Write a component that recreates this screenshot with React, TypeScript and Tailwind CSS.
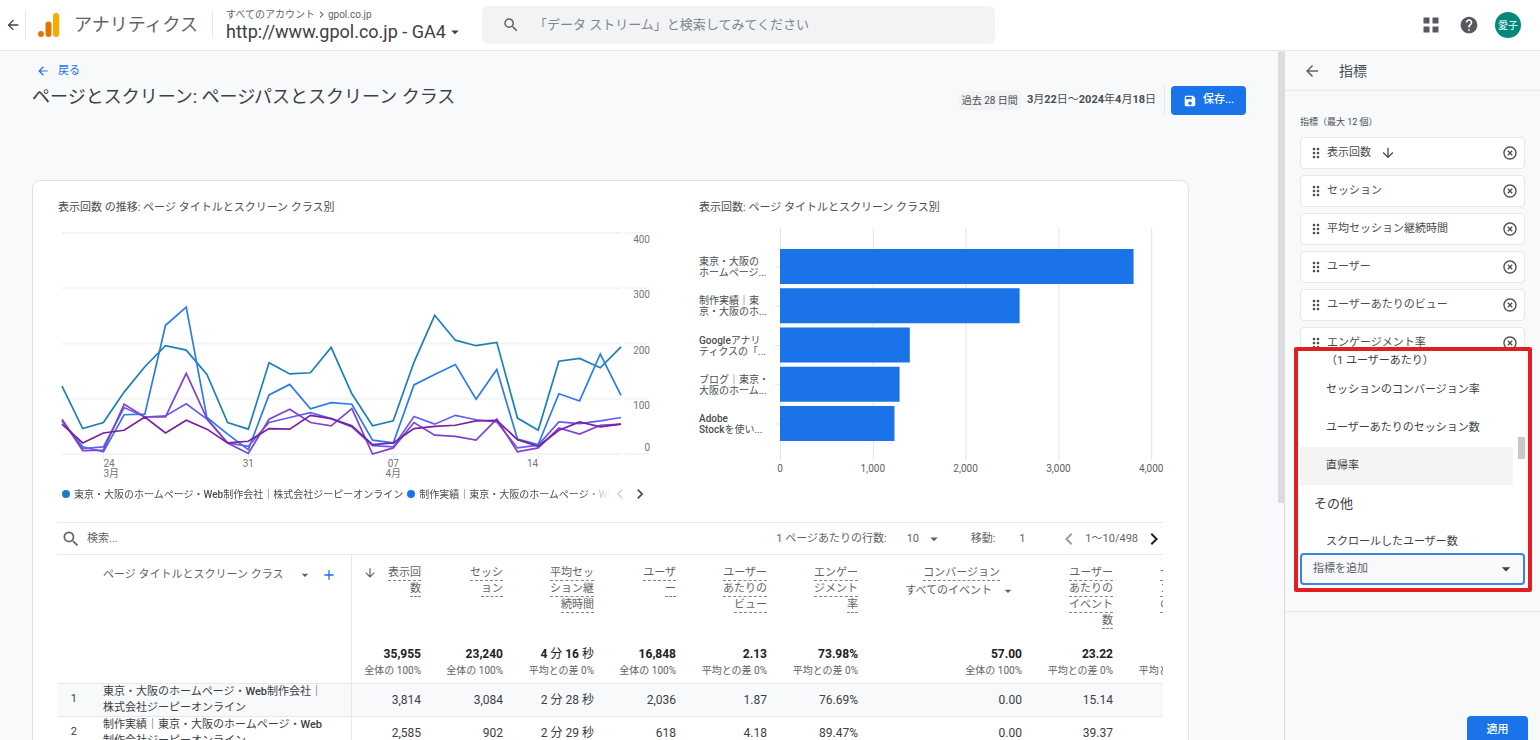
import type { ReactNode } from 'react'
import {
  MdAdd,
  MdArrowBack,
  MdArrowDownward,
  MdArrowDropDown,
  MdChevronLeft,
  MdChevronRight,
  MdDragIndicator,
  MdHelp,
  MdHighlightOff,
  MdSave,
  MdSearch,
} from 'react-icons/md'

const SERIES = [
  { color: '#1a80b6', points: [123, 46, 57, 112, 158, 196, 188, 144, 57, 45, 165, 145, 147, 193, 109, 51, 60, 166, 251, 206, 196, 202, 65, 43, 168, 173, 156, 194] },
  { color: '#2b7bef', points: [60, 13, 4, 71, 72, 233, 266, 66, 36, 8, 107, 126, 82, 93, 90, 25, 20, 125, 144, 162, 99, 153, 27, 17, 109, 96, 181, 106] },
  { color: '#645df2', points: [60, 10, 13, 84, 67, 69, 91, 63, 20, 14, 57, 66, 75, 64, 49, 15, 13, 68, 54, 70, 62, 58, 11, 16, 58, 55, 60, 66] },
  { color: '#8440d0', points: [63, 6, 7, 90, 67, 67, 146, 64, 20, 1, 63, 81, 57, 51, 82, 0, 11, 57, 34, 32, 25, 63, 4, 11, 47, 36, 52, 54] },
  { color: '#7b1fa2', points: [54, 20, 38, 43, 67, 38, 61, 45, 20, 23, 46, 45, 70, 64, 51, 17, 20, 46, 50, 52, 60, 61, 26, 14, 43, 58, 49, 54] },
]

const BARS = [
  { lines: ['東京・大阪の', 'ホームページ...'], value: 3814 },
  { lines: ['制作実績｜東', '京・大阪のホ...'], value: 2585 },
  { lines: ['Googleアナリ', 'ティクスの「...'], value: 1400 },
  { lines: ['ブログ｜東京・', '大阪のホーム...'], value: 1290 },
  { lines: ['Adobe', 'Stockを使い...'], value: 1235 },
]

const COLUMNS = [
  { lines: ['表示回', '数'],                         total: '35,955',   note: '全体の 100%',   width: 'w-[76px]',  sorted: true },
  { lines: ['セッシ', 'ョン'],                       total: '23,240',   note: '全体の 100%',   width: 'w-[82px]'  },
  { lines: ['平均セッ', 'ション継', '続時間'],       total: '4 分 16 秒', note: '平均との差 0%', width: 'w-[91px]'  },
  { lines: ['ユーザ', 'ー'],                         total: '16,848',   note: '全体の 100%',   width: 'w-[82px]'  },
  { lines: ['ユーザー', 'あたりの', 'ビュー'],       total: '2.13',     note: '平均との差 0%', width: 'w-[91px]'  },
  { lines: ['エンゲー', 'ジメント', '率'],           total: '73.98%',   note: '平均との差 0%', width: 'w-[91px]'  },
  { lines: ['コンバージョン'],                       total: '57.00',    note: '全体の 100%',   width: 'w-[164px]', filter: 'すべてのイベント' },
  { lines: ['ユーザー', 'あたりの', 'イベント', '数'], total: '23.22',  note: '平均との差 0%', width: 'w-[91px]'  },
  { lines: ['セッショ', 'ンあたり', 'のイベン'],     total: '16.83',    note: '平均との差 0%', width: 'w-[91px]'  },
]

const ROWS = [
  {
    name: '東京・大阪のホームページ・Web制作会社｜株式会社ジーピーオンライン',
    cells: ['3,814', '3,084', '2 分 28 秒', '2,036', '1.87', '76.69%', '0.00', '15.14', '10.01'],
  },
  {
    name: '制作実績｜東京・大阪のホームページ・Web制作会社ジーピーオンライン',
    cells: ['2,585', '902', '2 分 29 秒', '618', '4.18', '89.47%', '0.00', '39.37', '26.98'],
  },
]

const METRICS = ['表示回数', 'セッション', '平均セッション継続時間', 'ユーザー', 'ユーザーあたりのビュー', 'エンゲージメント率']

// Latin runs are heavier than the Japanese text around them
function Mixed({ text, latin = 'font-medium' }: { text: string; latin?: string }) {
  return (
    <>
      {text.split(/([A-Za-z0-9.,%]+)/).map((part, i) =>
        i % 2 ? <span key={i} className={latin}>{part}</span> : part
      )}
    </>
  )
}

function Logo() {
  return (
    <svg width="22" height="26" viewBox="0 0 22 26" aria-hidden="true">
      <circle cx="3" cy="22" r="3" fill="#e37400" />
      <rect x="7.500" y="9.500" width="6" height="15.500" rx="3" fill="#e37400" />
      <rect x="15" y="1" width="6.200" height="24" rx="3" fill="#f9ab00" />
    </svg>
  )
}

function TopBar() {
  return (
    <header className="flex h-[51px] shrink-0 items-center border-b border-gray-200 bg-white">
      <button aria-label="戻る" className="ml-[5px] text-[#3c4043]"><MdArrowBack size={16} /></button>
      <span className="ml-1 h-[29px] w-px bg-gray-200" />
      <span className="ml-3"><Logo /></span>
      <span className="ml-[14px] text-lg text-[#5f6368]">アナリティクス</span>
      <span className="ml-[14px] h-[26px] w-px bg-gray-200" />
      <div className="ml-[13px] w-[256px] whitespace-nowrap">
        <p className="flex h-[14px] items-center text-[10px] text-[#5f6368]">
          すべてのアカウント<MdChevronRight size={13} />gpol.co.jp
        </p>
        <button className="flex h-[22px] items-center text-lg text-[#3c4043]">
          http://www.gpol.co.jp - GA4 <MdArrowDropDown size={18} />
        </button>
      </div>
      <label className="flex h-[38px] w-1/3 items-center rounded-md bg-[#f1f3f4] pl-5 text-[#5f6368]">
        <MdSearch size={18} />
        <input
          type="search"
          aria-label="検索"
          placeholder="「データ ストリーム」と検索してみてください"
          className="ml-[14px] flex-1 bg-transparent text-[13px] outline-none placeholder:text-[#80868b]"
        />
      </label>
      <div className="ml-auto flex items-center pr-[19px] text-[#55585d]">
        <button aria-label="アプリ">
          <svg width="16" height="16" viewBox="0 0 16 16" fill="currentColor">
            <path d="M0.500 0.500h6v6h-6zM9.500 0.500h6v6h-6zM0.500 9.500h6v6h-6zM9.500 9.500h6v6h-6z" />
          </svg>
        </button>
        <button aria-label="ヘルプ" className="ml-5"><MdHelp size={20} /></button>
        <button className="ml-4 size-[26px] rounded-full bg-[#00897b] text-[10px] text-white">愛子</button>
      </div>
    </header>
  )
}

function TrendChart() {
  const x = (i: number) => 4 + (i * 559) / 27
  const y = (v: number) => 237 - v * 0.5525
  const days = [
    { i: 2,  anchor: 'start',  text: '24', month: '3月' },
    { i: 9,  anchor: 'middle', text: '31' },
    { i: 16, anchor: 'middle', text: '07', month: '4月' },
    { i: 23, anchor: 'end',    text: '14' },
  ] as const

  return (
    <svg viewBox="0 0 592 264" className="w-full text-[10px]" role="img" aria-label="表示回数の推移">
      {[400, 300, 200, 100, 0].map((v) => (
        <g key={v}>
          <path d={`M4 ${y(v)}H563M567 ${y(v)}H591`} stroke="#f4f4f5" strokeWidth="2" />
          <text x="592" y={v ? y(v) + 10 : 234} textAnchor="end" fill="#757575">{v}</text>
        </g>
      ))}
      {days.map((d) => (
        <g key={d.i} fill="#757575" textAnchor={d.anchor}>
          <path d={`M${x(d.i)} 237v5`} stroke="#e8e8e8" />
          <text x={x(d.i)} y="250">{d.text}</text>
          {'month' in d && <text x={x(d.i)} y="260">{d.month}</text>}
        </g>
      ))}
      {SERIES.map((s) => (
        <polyline
          key={s.color}
          points={s.points.map((v, i) => `${x(i)},${y(v)}`).join(' ')}
          fill="none"
          stroke={s.color}
          strokeWidth="1.700"
        />
      ))}
    </svg>
  )
}

function PageBarChart() {
  return (
    <svg viewBox="0 0 464 264" className="w-full overflow-visible text-[10px]" role="img" aria-label="表示回数">
      {[0, 1000, 2000, 3000, 4000].map((v) => (
        <g key={v}>
          <path d={`M${81.5 + v * 0.0928} 11V243`} stroke="#e3e4e6" />
          <text x={81 + v * 0.0928} y="255" textAnchor="middle" fill="#616161">{v.toLocaleString('en-US')}</text>
        </g>
      ))}
      {BARS.map((b, i) => (
        <g key={b.lines[0]} transform={`translate(0 ${32 + i * 39.25})`}>
          <path d="M76 18h5" stroke="#e3e4e6" />
          <rect x="81" width={b.value * 0.0927} height="35" fill="#1a73e8" />
          {b.lines.map((line, n) => (
            <text key={line} y={16 + n * 11} fill="#4a4d51">
              {line.split(/([A-Za-z]+)/).map((p, k) => <tspan key={k} fontWeight={k % 2 ? 500 : 400}>{p}</tspan>)}
            </text>
          ))}
        </g>
      ))}
    </svg>
  )
}

function LegendItem({ color, children }: { color: string; children: ReactNode }) {
  return (
    <span className="flex shrink-0 items-center gap-1">
      <span className="size-2 rounded-full" style={{ backgroundColor: color }} />
      {children}
    </span>
  )
}

function ReportTable() {
  return (
    <div className="overflow-hidden">
      <table className="w-[1152px] table-fixed border-collapse text-right text-[#5f6368]">
        <colgroup>
          <col className="w-[32px]" />
          <col className="w-[261px]" />
          {COLUMNS.map((c, i) => <col key={i} className={c.width} />)}
        </colgroup>
        <thead className="border-b border-gray-200">
          <tr className="h-[90px] align-top">
            <th colSpan={2} className="border-r border-gray-200 pt-[10px] pl-[45px] font-normal">
              <div className="flex h-5 items-center whitespace-nowrap text-[11px]">
                ページ タイトルとスクリーン クラス
                <button aria-label="ディメンションを変更" className="ml-[14px]"><MdArrowDropDown size={16} /></button>
                <button aria-label="ディメンションを追加" className="ml-2 text-[#1a73e8]"><MdAdd size={16} /></button>
              </div>
            </th>
            {COLUMNS.map((c, i) => (
              <th key={i} className="pt-[10px] pr-[6px] text-[11px] leading-4 font-normal">
                <div className="flex justify-end">
                  {c.sorted && <MdArrowDownward size={14} className="mt-px mr-auto ml-[11px]" />}
                  <div className={c.filter ? 'flex flex-col items-end pr-[22px]' : 'flex flex-col items-end'}>
                    {c.lines.map((line) => (
                      <span key={line} className="h-4 border-b border-dashed border-[#80868b] whitespace-nowrap">{line}</span>
                    ))}
                  </div>
                </div>
                {c.filter && (
                  <button className="mt-[2px] ml-auto flex items-center gap-2 pr-[6px] whitespace-nowrap">
                    {c.filter}<MdArrowDropDown size={16} />
                  </button>
                )}
              </th>
            ))}
          </tr>
          <tr className="h-[38px] align-top leading-4">
            <td colSpan={2} className="border-r border-gray-200" />
            {COLUMNS.map((c, i) => (
              <td key={i} className="pt-px pr-[6px] whitespace-nowrap">
                <p className="text-xs text-[#202124]"><Mixed text={c.total} latin="font-bold" /></p>
                <p className="mt-px text-[10px]">{c.note}</p>
              </td>
            ))}
          </tr>
        </thead>
        <tbody className="text-[#3c4043]">
          {ROWS.map((row, i) => (
            <tr key={row.name} className="h-[33px] border-b border-gray-200 odd:bg-[#f8f9fb]">
              <td className="pr-[13px] text-[11px]">{i + 1}</td>
              <td className="border-r border-gray-200 pr-5 pl-[13px] text-left text-[11px] leading-4 break-all">
                <Mixed text={row.name} />
              </td>
              {row.cells.map((cell, n) => (
                <td key={n} className="pr-[6px] text-xs whitespace-nowrap">{cell}</td>
              ))}
            </tr>
          ))}
        </tbody>
      </table>
    </div>
  )
}

function Report() {
  return (
    <main className="min-w-0 flex-1 overflow-hidden px-8">
      <div className="flex items-start justify-between">
        <div className="pt-[10px]">
          <a href="#reports" className="ml-1 flex h-5 items-center gap-2 text-[11px] text-[#1a73e8]">
            <MdArrowBack size={14} />戻る
          </a>
          <h1 className="flex h-8 items-center text-lg text-[#3c4043]">ページとスクリーン: ページパスとスクリーン クラス</h1>
        </div>
        <div className="flex items-center pt-[35px] whitespace-nowrap text-[#4a4d51]">
          <span className="rounded-sm bg-[#f1f3f4] px-[3px] py-[2px] text-[10px]">過去 28 日間</span>
          <span className="ml-[6px] text-[11px]"><Mixed text="3月22日～2024年4月18日" latin="font-bold" /></span>
          <span className="ml-2 h-[29px] w-px bg-gray-200" />
          <button className="ml-[6px] flex h-[29px] w-[75px] items-center justify-center gap-[6px] rounded-sm bg-[#1a73e8] text-[11px] font-medium text-white">
            <MdSave size={14} />保存...
          </button>
        </div>
      </div>

      <section className="mt-[65px] mr-[57px] rounded-lg border border-[#e0e2e8] bg-white px-[25px] pt-[18px]">
        <div className="grid grid-cols-[592fr_464fr] gap-[49px] text-[#4a4d51]">
          <div>
            <h2 className="flex h-[18px] items-center text-[11px]">表示回数 の推移: ページ タイトルとスクリーン クラス別</h2>
            <TrendChart />
            <div className="mt-[3px] flex h-5 items-center pl-1 text-[10px]">
              <div className="flex w-[548px] gap-1 overflow-hidden whitespace-nowrap [mask-image:linear-gradient(to_right,black_95%,transparent)]">
                <LegendItem color={SERIES[0].color}>
                  <span><Mixed text="東京・大阪のホームページ・Web制作会社｜株式会社ジーピーオンライン" /></span>
                </LegendItem>
                <LegendItem color="#1a73e8">
                  <span>制作実績｜東京・大阪のホームページ・Web</span>
                </LegendItem>
              </div>
              <button aria-label="前の凡例" className="text-gray-300"><MdChevronLeft size={20} /></button>
              <button aria-label="次の凡例"><MdChevronRight size={20} /></button>
            </div>
          </div>
          <div>
            <h2 className="flex h-[18px] items-center text-[11px]">表示回数: ページ タイトルとスクリーン クラス別</h2>
            <PageBarChart />
          </div>
        </div>

        <div className="mt-[18px] flex h-[33px] items-center border-y border-gray-200 pt-px text-[11px] whitespace-nowrap text-[#5f6368]">
          <label className="flex flex-1 items-center pl-[3px]">
            <MdSearch size={20} />
            <input type="search" aria-label="表を検索" placeholder="検索..." className="ml-[6px] w-40 outline-none placeholder:text-[#5f6368]" />
          </label>
          <label htmlFor="rows">1 ページあたりの行数:</label>
          <div className="relative ml-5 flex items-center">
            <select id="rows" className="w-8 appearance-none bg-transparent outline-none">
              <option>10</option>
            </select>
            <MdArrowDropDown size={18} className="pointer-events-none absolute right-[-4px]" />
          </div>
          <label htmlFor="goto" className="ml-8">移動:</label>
          <input id="goto" defaultValue="1" className="ml-6 w-8 outline-none" />
          <button aria-label="前のページ" className="ml-[6px] text-gray-400"><MdChevronLeft size={24} /></button>
          <span className="ml-1">1～10/498</span>
          <button aria-label="次のページ" className="mr-[-3px] ml-1 text-[#202124]"><MdChevronRight size={24} /></button>
        </div>
        <ReportTable />
      </section>
    </main>
  )
}

function MetricPicker() {
  const item = 'flex h-[38px] shrink-0 items-center pl-[26px]'
  return (
    <div className="absolute right-2 bottom-[19px] left-[9px] rounded-xs border-4 border-[#e02020] bg-[#f8f9fb] pr-[3px] pb-[3px] pl-[2px] text-[11px] text-[#3c4043]">
      <div className="relative bg-white">
        <ul role="listbox" aria-label="指標" className="mr-3 flex h-[202px] flex-col overflow-hidden whitespace-nowrap">
          <li className="flex h-5 shrink-0 items-center pl-[26px]">（1 ユーザーあたり）</li>
          <li className={item}>セッションのコンバージョン率</li>
          <li className={item}>ユーザーあたりのセッション数</li>
          <li className={`${item} bg-[#f4f4f4]`}>直帰率</li>
          <li className="flex h-[38px] shrink-0 items-center pl-[14px] text-[13px]">その他</li>
          <li className={item}>スクロールしたユーザー数</li>
        </ul>
        <span className="absolute top-[86px] right-0 h-[22px] w-[7px] bg-[#c8c8c8]" />
      </div>
      <div className="relative">
        <select
          aria-label="指標を追加"
          className="h-8 w-full appearance-none rounded-sm border-2 border-[#3c82e8] bg-[#f8f9fb] pl-[11px] text-[#5f6368] outline-none"
        >
          <option>指標を追加</option>
        </select>
        <MdArrowDropDown size={20} className="pointer-events-none absolute top-[6px] right-[9px]" />
      </div>
    </div>
  )
}

function MetricsPanel() {
  return (
    <aside className="flex w-64 shrink-0 flex-col overflow-hidden border-l border-[#dadce0] text-[#4a4d51]">
      <div className="flex h-10 shrink-0 items-center border-b border-gray-200 pl-[18px]">
        <button aria-label="戻る" className="text-[#5f6368]"><MdArrowBack size={18} /></button>
        <h2 className="ml-[18px] text-sm">指標</h2>
      </div>
      <section className="relative h-[521px] shrink-0 border-b border-gray-200 px-[15px] pt-[23px]">
        <h3 className="h-4 text-[9px] leading-4">指標（最大 12 個）</h3>
        <ul className="mt-[7px] flex flex-col gap-[6px] text-[11px]">
          {METRICS.map((name, i) => (
            <li key={name} className="flex h-8 items-center rounded-sm border border-gray-200 bg-white pr-[6px] pl-[7px]">
              <MdDragIndicator size={16} />
              <span className="ml-[3px]">{name}</span>
              {i === 0 && <MdArrowDownward size={16} className="ml-[9px]" />}
              <button aria-label={`${name}を削除`} className="ml-auto"><MdHighlightOff size={16} /></button>
            </li>
          ))}
        </ul>
        <MetricPicker />
      </section>
      <div className="mt-[104px] flex justify-end pr-3">
        <button className="h-[29px] w-[61px] shrink-0 rounded-sm bg-[#1a73e8] text-[11px] font-medium text-white">適用</button>
      </div>
    </aside>
  )
}

export default function App() {
  return (
    <div className="flex h-screen flex-col overflow-hidden bg-[#f8f9fb] font-[Roboto,'Noto_Sans_CJK_JP',sans-serif]">
      <TopBar />
      <div className="flex min-h-0 flex-1">
        <Report />
        <div className="w-[6px] shrink-0">
          <div className="h-[452px] rounded-t-sm bg-[#dadce0]" />
        </div>
        <MetricsPanel />
      </div>
    </div>
  )
}
